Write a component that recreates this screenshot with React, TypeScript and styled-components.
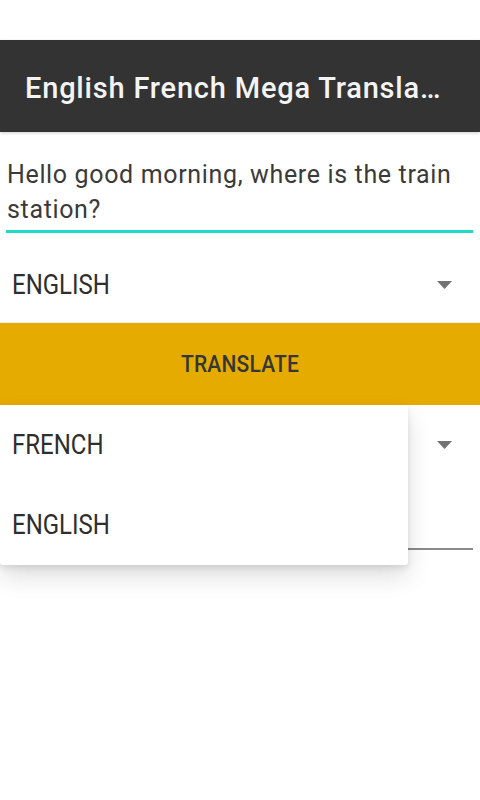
import React from "react"
import styled, { createGlobalStyle } from "styled-components"

const GlobalStyle = createGlobalStyle`
  html, body {
    margin: 0;
    padding: 0;
    background: #fff;
    font-family: Roboto, "Noto Sans", "Liberation Sans", sans-serif;
  }
`

const Screen = styled.div`
  position: relative;
  width: 480px;
  height: 800px;
  overflow: hidden;
  background: #fff;
  display: flex;
  flex-direction: column;
`

const StatusSpace = styled.div`
  height: 40px;
  background: #fff;
`

const Toolbar = styled.header`
  height: 92px;
  background: #333333;
  display: flex;
  align-items: center;
  padding-left: 25px;
  box-shadow: 0 1px 3px rgba(0, 0, 0, 0.2);
`

const Title = styled.h1`
  margin: 0;
  color: #f4f4f4;
  font-size: 29px;
  font-weight: 500;
  letter-spacing: 0.8px;
  white-space: nowrap;
  padding-top: 4px;
`

const Field = styled.div<{ $line: string; $thick: number }>`
  margin: 0 7px 0 6px;
  padding: 25px 0 3px 1px;
  border-bottom: ${(p) => p.$thick}px solid ${(p) => p.$line};
  font-size: 25px;
  line-height: 35px;
  letter-spacing: 0.65px;
  color: #3a3a3a;
  min-height: 35px;
`

const Spinner = styled.div<{ $height: number; $top: number }>`
  height: ${(p) => p.$height}px;
  padding: ${(p) => p.$top}px 28px 0 12px;
  box-sizing: border-box;
  display: flex;
  align-items: center;
  justify-content: space-between;
`

// the item labels are drawn a little taller than plain Roboto
const Label = styled.span`
  display: inline-block;
  font-size: 24px;
  color: #2e2e2e;
  transform: scaleY(1.17);
  transform-origin: left center;
`

const Arrow = styled.svg`
  width: 15px;
  height: 8px;
  display: block;
`

const TranslateButton = styled.button`
  height: 82px;
  width: 100%;
  border: none;
  background: #e5ab00;
  color: #363636;
  font-family: inherit;
  font-size: 21px;
  font-weight: 500;
  letter-spacing: 0.2px;
  box-shadow: 0 -1px 1px rgba(0, 0, 0, 0.06);

  span {
    display: inline-block;
    transform: scaleY(1.18);
  }
`

const Popup = styled.ul`
  position: absolute;
  top: 405px;
  left: 0;
  width: 408px;
  margin: 0;
  padding: 0;
  list-style: none;
  background: #fff;
  border-radius: 0 0 3px 3px;
  box-shadow: 0 12px 24px rgba(0, 0, 0, 0.13), 0 3px 6px rgba(0, 0, 0, 0.1);
`

const PopupItem = styled.li`
  height: 80px;
  padding-left: 12px;
  display: flex;
  align-items: center;
`

const DropArrow = () => (
  <Arrow viewBox="0 0 15 8">
    <path d="M0 0 L15 0 L7.5 8 Z" fill="#737373" />
  </Arrow>
)

export default function App() {
  return (
    <>
      <GlobalStyle />
      <Screen>
        <StatusSpace />
        <Toolbar>
          <Title>English French Mega Transla…</Title>
        </Toolbar>
        <Field $line="#1edbc9" $thick={3}>
          Hello good morning, where is the train station?
        </Field>
        <Spinner $height={90} $top={14}>
          <Label>ENGLISH</Label>
          <DropArrow />
        </Spinner>
        <TranslateButton>
          <span>TRANSLATE</span>
        </TranslateButton>
        <Spinner $height={80} $top={0}>
          <Label>FRENCH</Label>
          <DropArrow />
        </Spinner>
        <Field $line="#8a8a8a" $thick={2} />
        <Popup>
          <PopupItem>
            <Label>FRENCH</Label>
          </PopupItem>
          <PopupItem>
            <Label>ENGLISH</Label>
          </PopupItem>
        </Popup>
      </Screen>
    </>
  )
}
